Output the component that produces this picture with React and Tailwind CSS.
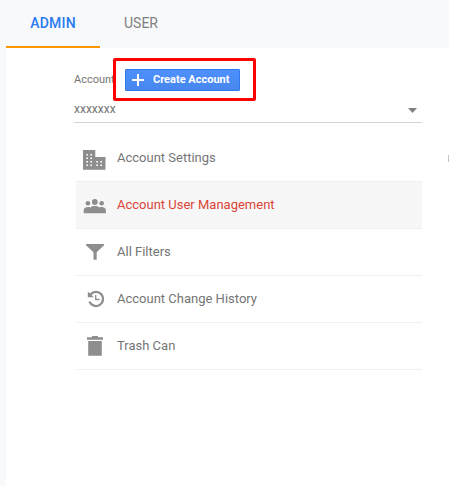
const ICONS = {
  building: (
    <svg className="ml-[7px] mt-[3px] h-5 w-[23px]" viewBox="0 0 23 20" fill="#8e8e8e">
      <path fillRule="evenodd" d="M0 0h12.3v7H22.5v12.700H0zM3.3 4v1.500h1.700V4zM7.3 4v1.500h1.700V4zM3.3 7.500v1.500h1.700v-1.500zM7.3 7.500v1.500h1.700v-1.500zM3.3 11v1.500h1.700v-1.500zM7.3 11v1.500h1.700v-1.500zM3.3 14.500v1.500h1.700v-1.500zM7.3 14.500v1.500h1.700v-1.500zM13.3 11v1.500h1.700v-1.500zM17.3 11v1.500h1.700v-1.500zM13.3 14.500v1.500h1.700v-1.500zM17.3 14.500v1.500h1.700v-1.500z" />
    </svg>
  ),
  people: (
    <svg className="ml-[7px] mt-[3px] h-[15px] w-[23px]" viewBox="0 0 23 15" fill="#8e8e8e">
      <circle cx="11.8" cy="3" r="2.9" />
      <circle cx="4.9" cy="4.3" r="2.3" />
      <circle cx="18.7" cy="4.3" r="2.3" />
      <path d="M.7 14.2v-2.8C.7 9 3 8 5 8c1 0 1.800.2 2.300.4C8.600 7.500 10.200 7.100 11.800 7.100s3.200.4 4.500 1.300C16.800 8.200 17.600 8 18.600 8c2 0 4.300 1 4.300 3.400v2.800z" />
    </svg>
  ),
  filter: (
    <svg className="ml-[10px] mt-[-1px] h-4 w-[18px]" viewBox="0 0 18 16" fill="#8e8e8e">
      <path d="M0 0h18v1.300l-7.300 7V15.700H7.500V8.300L0 1.300z" />
    </svg>
  ),
  history: (
    <svg className="ml-[11px] mt-[-1px] h-[18px] w-[18px]" viewBox="0 0 18 18" fill="none" stroke="#8e8e8e">
      <path d="M3.200 4.800A7.100 7.100 0 1 1 2.400 11.600" strokeWidth="2.300" />
      <path d="M.8 1.500V7.300H6.800z" fill="#8e8e8e" stroke="none" />
      <path d="M8.700 5V9.500H12.500" strokeWidth="1.300" />
    </svg>
  ),
  trash: (
    <svg className="ml-[11px] h-5 w-4" viewBox="0 0 16 20" fill="#8e8e8e">
      <path d="M0 1.300H5V0h6v1.300h5v2.400H0zM1.200 5h13.600v14.700H1.200z" />
    </svg>
  ),
};

const ITEMS = [
  { label: 'Account Settings', icon: 'building' },
  { label: 'Account User Management', icon: 'people', active: true },
  { label: 'All Filters', icon: 'filter' },
  { label: 'Account Change History', icon: 'history' },
  { label: 'Trash Can', icon: 'trash' },
];

function MenuItem({ label, icon, active }) {
  return (
    <li className={`flex h-[47px] items-center border-b border-[#f0f0f0] ${active ? 'bg-[#f7f7f7] text-[#db4437]' : 'text-[#757575]'}`}>
      <span className="flex w-[41px] shrink-0 items-center">{ICONS[icon]}</span>
      <span className="whitespace-nowrap text-[13px] leading-5">{label}</span>
    </li>
  );
}

export default function App() {
  return (
    <div className="flex h-[486px] w-[449px] flex-col overflow-hidden bg-[#f8f9fb] pl-[6px] font-['Roboto',sans-serif]">
      <nav className="flex h-12 shrink-0 text-[14px] leading-[46px]">
        <div className="w-[94px] border-b-2 border-[#ff9800] text-center font-medium tracking-[0.2px] text-[#2a7bf0]">ADMIN</div>
        <div className="w-[82px] text-center text-[#808080]">USER</div>
      </nav>
      <main className="flex flex-1 items-start justify-between bg-white pl-[68px]">
        <section className="w-[348px]">
          <div className="relative flex h-[53px] items-start pt-[21px]">
            <span className="w-[51px] pt-[3px] text-[11px] leading-4 text-[#757575]">Account</span>
            <button className="flex h-[22px] w-[115px] items-center rounded-[1px] border border-[#3079ed] bg-linear-to-b from-[#4d90fe] to-[#4787ed] text-[11px] font-bold text-white">
              <svg className="ml-[6px] mr-[9px] size-3" viewBox="0 0 12 12" stroke="white" strokeWidth="2">
                <path d="M6 0v12M0 6h12" />
              </svg>
              <span className="whitespace-nowrap">Create Account</span>
            </button>
            <div className="absolute left-[39px] top-[10px] h-[43px] w-[143px] rounded-[2px] border-[3px] border-[#ff0000]" />
          </div>
          <div className="flex h-[22px] items-center justify-between border-b border-[#d5d5d5] pb-[4px] pr-[5px] text-[12px] text-[#757575]">
            <span className="pb-[2px]">xxxxxxx</span>
            <svg className="mt-[2px] h-[5px] w-[9px]" viewBox="0 0 9 5" fill="#808080">
              <path d="M0 0h9L4.500 5z" />
            </svg>
          </div>
          <ul className="ml-[2px] mt-[12px]">
            {ITEMS.map((item) => <MenuItem key={item.label} {...item} />)}
          </ul>
        </section>
        <div className="mt-[107px] h-[7px] w-px bg-[#c4c4c4]" />
      </main>
    </div>
  );
}
